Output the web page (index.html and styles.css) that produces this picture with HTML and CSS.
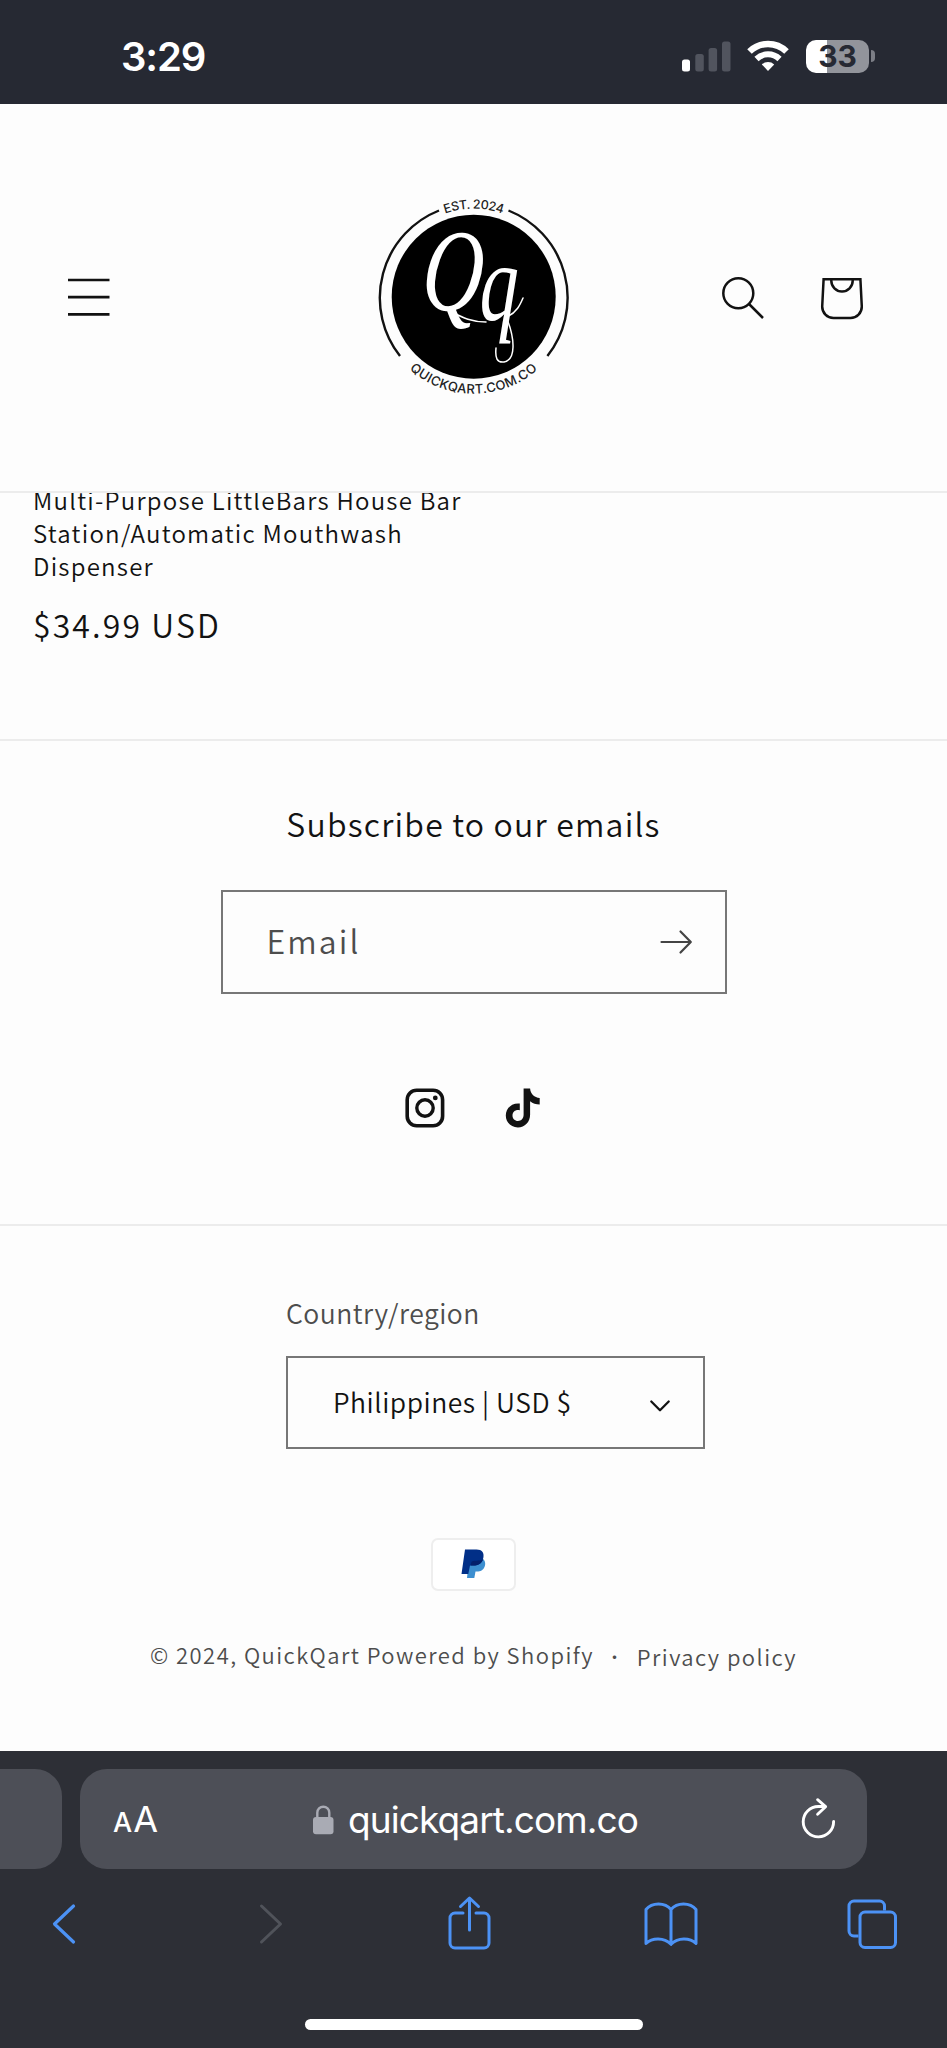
FILE: index.html
```html
<!DOCTYPE html>
<html lang="en">
<head>
<meta charset="utf-8">
<title>QuickQart</title>
<link rel="stylesheet" href="styles.css">
</head>
<body>
<div class="status">
  <span class="time">3:29</span>
  <div class="status-icons">
    <svg class="signal" width="48" height="31" viewBox="0 0 48 31"><rect x="0" y="18.500" width="8" height="12" rx="2.500" fill="#fff"/><g fill="#51545e"><rect x="13.300" y="13" width="8.500" height="17.500" rx="2.500"/><rect x="26.600" y="7" width="8.500" height="23.500" rx="2.500"/><rect x="40" y="0.500" width="8.500" height="30" rx="2.500"/></g></svg>
    <svg class="wifi" width="42" height="32" viewBox="0 0 42 32" fill="none" stroke="#fff"><path d="M2.500 11.500a26.500 26.500 0 0 1 37 0" stroke-width="6.500"/><path d="M9.500 19a16.500 16.500 0 0 1 23 0" stroke-width="6"/><path d="M21 31l-6.200-6.600a9 9 0 0 1 12.400 0z" fill="#fff" stroke="none"/></svg>
    <div class="battery">33</div>
    <div class="nub"></div>
  </div>
</div>
<header class="header">
  <svg class="menu" width="42" height="40" viewBox="0 0 42 40" stroke="#121212" stroke-width="2.700"><path d="M0 3h41.500M0 20.200h41.500M0 37.400h41.500"/></svg>
  <svg class="logo" width="250" height="230" viewBox="0 0 250 230">
    <defs>
      <path id="arc-top" d="M35.700 116.700A88 88 0 0 1 211.700 116.700"/>
      <path id="arc-bottom" d="M26.700 116.700A97 97 0 0 0 220.700 116.700"/>
    </defs>
    <circle cx="123.700" cy="116.700" r="82" fill="#000"/>
    <g fill="none" stroke="#111" stroke-width="2.400"><path d="M89 30.500A94 94 0 0 0 50 176"/><path d="M158.500 30.500A94 94 0 0 1 197.400 176"/></g>
    <text class="ring-text"><textPath href="#arc-top" startOffset="50%" text-anchor="middle">EST. 2024</textPath></text>
    <text class="ring-text ring-url"><textPath href="#arc-bottom" startOffset="50%" text-anchor="middle">QUICKQART.COM.CO</textPath></text>
    <text class="script" transform="translate(70 130) scale(.78 1.080) skewX(-6)" font-size="108">Q</text>
    <text class="script" transform="translate(129 140) scale(.83 1.200) skewX(-3)" font-size="92">q</text>
    <g fill="none" stroke="#fff" stroke-width="1.500" stroke-linecap="round"><path d="M102 132c11 6 20 10 34 10"/><path d="M157 137c10-5 13-12 16-19"/><path d="M157 139c8 20 9 41-3 43-7 1-9-4-8-14"/></g>
  </svg>
  <div class="actions">
    <svg width="44" height="44" viewBox="0 0 44 44" fill="none" stroke="#121212" stroke-width="2.500"><circle cx="17.300" cy="17.300" r="15"/><path d="M28 28l14 14"/></svg>
    <svg width="44" height="44" viewBox="0 0 44 44" fill="none" stroke="#121212" stroke-width="2.500"><path d="M4.600 3.300h36.800l1.400 27.200a11.300 11.300 0 0 1-11.300 11.500H14.500A11.300 11.300 0 0 1 3.200 30.500z"/><path d="M12.300 3.300v1.400a10.700 10.700 0 0 0 21.400 0v-1.400"/></svg>
  </div>
</header>
<main class="product">
  <h3 class="title">Multi-Purpose LittleBars House Bar<br>Station/Automatic Mouthwash<br>Dispenser</h3>
  <div class="price">$34.99 USD</div>
</main>
<section class="newsletter">
  <h2 class="subscribe">Subscribe to our emails</h2>
  <div class="email"><span>Email</span>
    <svg width="32" height="24" viewBox="0 0 32 24" fill="none" stroke="#444" stroke-width="2.200" stroke-linecap="round" stroke-linejoin="round"><path d="M1.500 12h29M20.500 1.500L30.800 12 20.500 22.500"/></svg>
  </div>
  <div class="social">
    <svg width="40" height="40" viewBox="0 0 40 40" fill="none" stroke="#121212"><rect x="2.200" y="2.200" width="35.400" height="35.600" rx="9.500" stroke-width="3.600"/><circle cx="20" cy="20" r="8.200" stroke-width="3.400"/><circle cx="30.300" cy="9.900" r="2.400" fill="#121212" stroke="none"/></svg>
    <svg width="36" height="40" viewBox="0 0 36 40" fill="#121212"><path d="M18.600.5h6.500c.4 5.500 4.300 9.100 9.600 9.400v6.500c-3.600 0-6.900-1.100-9.600-3.200v13.500c0 7.200-5.300 12.700-12.200 12.700C6 39.400.8 34.300.8 27.500c0-7.500 6.300-12.900 14-12v6.700c-4-1-7.300 1.400-7.300 5.200 0 3.200 2.400 5.500 5.500 5.500 3.300 0 5.600-2.300 5.600-6.100z"/></svg>
  </div>
</section>
<footer class="footer">
  <div class="region">
    <div class="region-label">Country/region</div>
    <div class="select"><span>Philippines | USD $</span>
      <svg class="chevron" width="20" height="12" viewBox="0 0 20 12" fill="none" stroke="#121212" stroke-width="2.300" stroke-linecap="round" stroke-linejoin="round"><path d="M1.300 1.500l8.700 8.700 8.700-8.700"/></svg>
    </div>
  </div>
  <div class="paypal">
    <svg width="26" height="30" viewBox="0 0 26 30"><path d="M8 10h14c2.500 2 3 5.500 1 9-1.800 3-4.500 3.600-8.500 3.600L13.300 29H6z" fill="#3d8fd0"/><path d="M4 .5h11.500c5.500 0 8 3.300 6.800 8.500-1.200 5.300-4.800 7.500-10 7.500H9l-1.700 8.500H.5z" fill="#012f87"/><path d="M9.500 16.500h3c4.500 0 8.200-2 9.700-6.300-4 2.600-10 .3-11.700 2.800z" fill="#04206b"/></svg>
  </div>
  <div class="legal"><span class="copy">© 2024, QuickQart Powered by Shopify</span><span class="dot">·</span><span class="privacy">Privacy policy</span></div>
</footer>
<div class="browser">
  <div class="tabs">
    <div class="prev-tab"></div>
    <div class="address">
      <span class="aa"><small>A</small>A</span>
      <div class="domain">
        <svg width="21" height="30" viewBox="0 0 21 30"><rect x="0" y="12" width="20.500" height="17.300" rx="3" fill="#a9abb4"/><path d="M4.300 13V7.700a6 6 0 0 1 12 0V13" fill="none" stroke="#a9abb4" stroke-width="2.400"/></svg>
        <span>quickqart.com.co</span>
      </div>
      <svg class="reload" width="36" height="42" viewBox="0 0 36 42" fill="none" stroke="#fff" stroke-width="2.900" stroke-linecap="round" stroke-linejoin="round"><path d="M34.600 22.500A15.200 15.200 0 1 1 19.400 7.500h6.500"/><path d="M18.600.7l8 7-8 7.500"/></svg>
    </div>
  </div>
  <div class="toolbar">
    <svg width="24" height="42" viewBox="0 0 24 42" fill="none" stroke="#4c92f5" stroke-width="3.200" stroke-linecap="round" stroke-linejoin="round"><path d="M21.500 3L2.500 21l19 18"/></svg>
    <svg width="24" height="42" viewBox="0 0 24 42" fill="none" stroke="#50535a" stroke-width="3" stroke-linecap="round" stroke-linejoin="round"><path d="M2.500 3l19 18-19 18"/></svg>
    <svg class="share" width="44" height="54" viewBox="0 0 44 54" fill="none" stroke="#4c92f5" stroke-width="3" stroke-linecap="round" stroke-linejoin="round"><path d="M15 17H7a5 5 0 0 0-5 5v25a5 5 0 0 0 5 5h29a5 5 0 0 0 5-5V22a5 5 0 0 0-5-5h-8M21.500 34V2.500M12.500 10.500l9-8.500 9 8.500"/></svg>
    <svg width="54" height="46" viewBox="0 0 54 46" fill="none" stroke="#4c92f5" stroke-width="3" stroke-linejoin="round"><path d="M27 8.500C21 1 8 1 2 8.500V42.500c6-6 18-6.500 25 .8 7-7.300 19-6.800 25-.8V8.500C46 1 33 1 27 8.500zM27 8.500v35"/></svg>
    <svg width="50" height="50" viewBox="0 0 50 50" fill="none" stroke="#4c92f5" stroke-width="3"><rect x="13" y="13" width="35.500" height="35.500" rx="5"/><path d="M11.500 37H7a5 5 0 0 1-5-5V7a5 5 0 0 1 5-5h25.500a5 5 0 0 1 5 5v4.500"/></svg>
  </div>
  <div class="home"></div>
</div>
</body>
</html>
```
FILE: styles.css
```css
* { box-sizing: border-box; }
body { margin: 0; width: 947px; height: 2048px; overflow: hidden; background: #fdfdfd; color: #121212; font-family: "Noto Sans CJK SC", "Noto Sans", sans-serif; font-weight: 350; }
svg { display: block; flex: none; overflow: visible; }
h2, h3 { margin: 0; font-weight: inherit; }

.status { height: 104px; background: #262933; color: #fff; display: flex; justify-content: space-between; padding: 32px 72px 0 121px; font-family: Inter, sans-serif; }
.time { font-size: 40px; font-weight: 600; line-height: 50px; letter-spacing: -1.1px; }
.status-icons { display: flex; height: 48px; align-items: center; }
.wifi { margin-left: 17px; }
.battery { margin-left: 17px; width: 63px; height: 33px; border-radius: 10px; background: linear-gradient(90deg, #fff 21px, #92949b 21px); color: #262933; font-size: 30px; font-weight: 700; line-height: 33px; text-align: center; }
.nub { width: 4px; height: 12px; margin-left: 2px; border-radius: 0 6px 6px 0; background: #7c7e86; }

.header { position: relative; z-index: 1; height: 389px; background: #fdfdfd; border-bottom: 2px solid #ececec; display: grid; grid-template-columns: 350px 250px 1fr; align-items: start; padding-top: 76px; }
.menu { margin: 97px 0 0 67.5px; }
.actions { display: flex; gap: 54px; padding: 96px 0 0 121px; }
.ring-text { font-family: Inter, sans-serif; font-size: 12.5px; font-weight: 500; fill: #222; letter-spacing: -0.4px; }
.ring-url { font-size: 13px; letter-spacing: 0.4px; }
.script { font-family: "Liberation Serif", serif; font-style: italic; fill: #fff; }

.product { height: 248px; margin-top: -10px; padding-left: 33px; }
.title { font-size: 24px; line-height: 33px; letter-spacing: 1.24px; }
.price { margin-top: 22px; font-size: 32px; line-height: 40px; letter-spacing: 2.1px; }

.newsletter { margin-top: 8px; height: 485px; border-top: 2px solid #ececec; padding-top: 62px; display: flex; flex-direction: column; align-items: center; }
.subscribe { font-size: 32px; line-height: 40px; letter-spacing: 1.2px; white-space: nowrap; }
.email { width: 506px; height: 104px; margin-top: 47px; border: 2px solid #777; display: flex; align-items: center; justify-content: space-between; padding: 0 33px 0 44px; font-size: 32px; line-height: 40px; letter-spacing: 2.1px; color: #4d4d4d; }
.email span { padding-bottom: 4px; }
.social { display: flex; gap: 60px; margin-top: 94px; padding-right: 2px; }

.footer { height: 527px; border-top: 2px solid #ececec; padding-top: 69px; display: flex; flex-direction: column; align-items: center; color: #4d4d4d; }
.region { width: 375px; }
.region-label { font-size: 26.5px; line-height: 36px; letter-spacing: .5px; }
.select { width: 419px; height: 93px; margin-top: 25px; border: 2px solid #777; padding: 0 33px 0 45px; display: flex; align-items: center; justify-content: space-between; color: #121212; font-size: 26.5px; line-height: 36px; letter-spacing: .53px; white-space: nowrap; }
.select span { padding-bottom: 2px; }
.chevron { margin-top: 6px; }
.paypal { width: 85px; height: 53px; margin-top: 89px; border: 2px solid #eee; border-radius: 7px; background: #fff; display: flex; justify-content: center; padding-top: 9px; }
.legal { display: flex; width: 647px; margin-top: 47px; font-size: 22px; line-height: 32px; letter-spacing: 1.45px; white-space: nowrap; }
.dot { margin: 0 auto; font-size: 17px; padding-top: 3px; }
.privacy { padding-top: 2px; }

.browser { height: 297px; background: #2d2f36; }
.tabs { display: flex; gap: 18px; padding-top: 18px; }
.prev-tab { width: 62px; height: 100px; border-radius: 0 27px 27px 0; background: #4d4f57; }
.address { width: 787px; height: 100px; border-radius: 27px; background: #4d4f57; color: #fff; display: grid; grid-template-columns: 233px 1fr 68px; font-family: Inter, sans-serif; font-weight: 400; align-items: center; }
.aa { padding: 3px 0 0 33px; font-size: 36px; line-height: 50px; }
.aa small { font-size: 27px; font-weight: 500; margin-right: 1px; }
.domain { display: flex; align-items: center; gap: 14px; font-size: 37px; line-height: 50px; letter-spacing: -.9px; padding-top: 1px; }
.reload { align-self: start; margin-top: 30px; }
.toolbar { display: grid; grid-template-columns: 207px 189px 196px 203px 50px; align-items: center; padding-left: 52px; height: 110px; }
.share { margin-bottom: 3px; }
.home { width: 338px; height: 11px; margin: 40px auto 0; border-radius: 6px; background: #fff; }
```
